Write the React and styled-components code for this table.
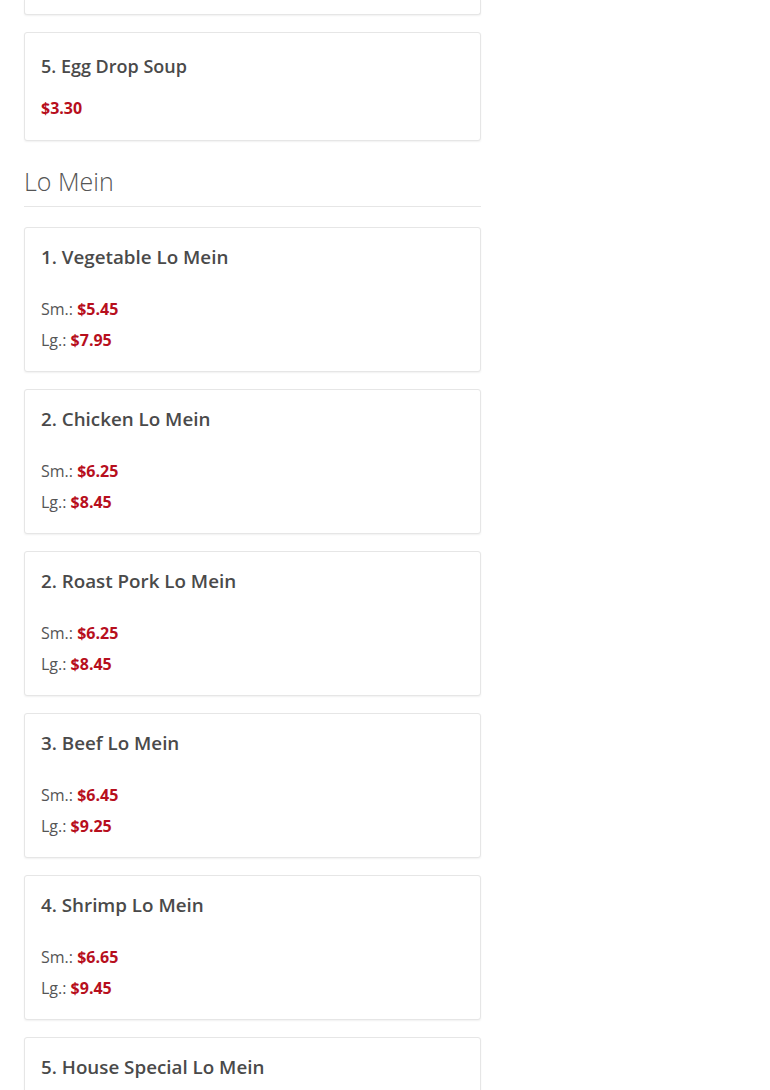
import styled, { createGlobalStyle } from 'styled-components';

const GlobalStyle = createGlobalStyle`
  html, body {
    margin: 0;
    padding: 0;
    background: #fff;
  }
  body {
    font-family: 'Open Sans', 'Liberation Sans', sans-serif;
    color: #4a4a4a;
    overflow: hidden;
  }
`;

const Page = styled.div`
  width: 457px;
  padding-left: 24px;
`;

const Card = styled.div`
  background: #fff;
  border: 1px solid #e6e6e6;
  border-radius: 3px;
  box-shadow: 0 1px 2px rgba(0, 0, 0, 0.06);
  padding: ${(p) => (p.single ? '20px 16px 16px' : '16px 16px 15px')};
  margin-bottom: 17px;
  box-sizing: border-box;
`;

const CardStub = styled(Card)`
  border-top: none;
  border-radius: 0 0 3px 3px;
  height: 15px;
  padding: 0;
`;

const Title = styled.h3`
  margin: 0;
  font-size: ${(p) => (p.small ? '18px' : '18.8px')};
  font-weight: 600;
  line-height: 26px;
  color: #4a4a4a;
`;

const Prices = styled.div`
  margin-top: ${(p) => (p.single ? '14px' : '24px')};
`;

const PriceLine = styled.div`
  font-size: 16px;
  line-height: 31px;
  color: #555;
`;

const Amount = styled.span`
  color: #b70f1d;
  font-weight: 700;
`;

const Section = styled.div`
  padding-top: 7px;
`;

const SectionTitle = styled.h2`
  margin: 0;
  font-size: 25px;
  font-weight: 300;
  line-height: 32px;
  color: #555;
  padding-bottom: 9px;
  border-bottom: 1px solid #e6e6e6;
  margin-bottom: 20px;
`;

const loMein = [
  { name: '1. Vegetable Lo Mein', sm: '$5.45', lg: '$7.95' },
  { name: '2. Chicken Lo Mein', sm: '$6.25', lg: '$8.45' },
  { name: '2. Roast Pork Lo Mein', sm: '$6.25', lg: '$8.45' },
  { name: '3. Beef Lo Mein', sm: '$6.45', lg: '$9.25' },
  { name: '4. Shrimp Lo Mein', sm: '$6.65', lg: '$9.45' },
  { name: '5. House Special Lo Mein', sm: '$6.95', lg: '$9.95' },
];

export default function App() {
  return (
    <Page>
      <GlobalStyle />
      <CardStub />
      <Card single>
        <Title small>5. Egg Drop Soup</Title>
        <Prices single>
          <PriceLine>
            <Amount>$3.30</Amount>
          </PriceLine>
        </Prices>
      </Card>
      <Section>
        <SectionTitle>Lo Mein</SectionTitle>
        {loMein.map((item) => (
          <Card key={item.name}>
            <Title>{item.name}</Title>
            <Prices>
              <PriceLine>
                Sm.: <Amount>{item.sm}</Amount>
              </PriceLine>
              <PriceLine>
                Lg.: <Amount>{item.lg}</Amount>
              </PriceLine>
            </Prices>
          </Card>
        ))}
      </Section>
    </Page>
  );
}
